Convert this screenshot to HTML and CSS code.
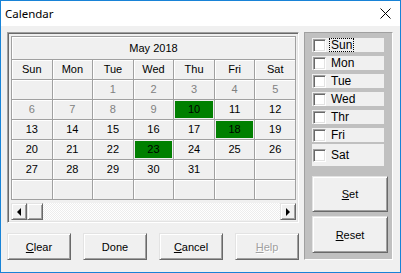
FILE: index.html
```html
<!DOCTYPE html>
<html>
<head>
  <title>Calendar</title>
  <link rel="stylesheet" href="styles.css">
</head>
<body>
  <div class="window">
    <div class="titlebar">
      <span class="title">Calendar</span>
      <svg class="close" width="11" height="11" viewBox="0 0 11 11">
        <path d="M0.5 0.5 L10.5 10.5 M10.5 0.5 L0.5 10.5" stroke="#000" stroke-width="1" fill="none"/>
      </svg>
    </div>

    <div class="content">
      <div class="left">
        <div class="cal-frame">
          <div class="cal-grid">
            <div class="month">May 2018</div>

            <div class="cell head">Sun</div>
            <div class="cell head">Mon</div>
            <div class="cell head">Tue</div>
            <div class="cell head">Wed</div>
            <div class="cell head">Thu</div>
            <div class="cell head">Fri</div>
            <div class="cell head">Sat</div>

            <div class="cell"></div>
            <div class="cell"></div>
            <div class="cell dim">1</div>
            <div class="cell dim">2</div>
            <div class="cell dim">3</div>
            <div class="cell dim">4</div>
            <div class="cell dim">5</div>

            <div class="cell dim">6</div>
            <div class="cell dim">7</div>
            <div class="cell dim">8</div>
            <div class="cell dim">9</div>
            <div class="cell sel">10</div>
            <div class="cell">11</div>
            <div class="cell">12</div>

            <div class="cell">13</div>
            <div class="cell">14</div>
            <div class="cell">15</div>
            <div class="cell">16</div>
            <div class="cell">17</div>
            <div class="cell sel">18</div>
            <div class="cell">19</div>

            <div class="cell">20</div>
            <div class="cell">21</div>
            <div class="cell">22</div>
            <div class="cell sel">23</div>
            <div class="cell">24</div>
            <div class="cell">25</div>
            <div class="cell">26</div>

            <div class="cell">27</div>
            <div class="cell">28</div>
            <div class="cell">29</div>
            <div class="cell">30</div>
            <div class="cell">31</div>
            <div class="cell"></div>
            <div class="cell"></div>

            <div class="cell"></div>
            <div class="cell"></div>
            <div class="cell"></div>
            <div class="cell"></div>
            <div class="cell"></div>
            <div class="cell"></div>
            <div class="cell"></div>
          </div>

          <div class="scrollbar">
            <div class="sb-btn"><span class="arrow-left"></span></div>
            <div class="sb-btn"></div>
            <div class="sb-track"></div>
            <div class="sb-btn"><span class="arrow-right"></span></div>
          </div>
        </div>

        <div class="buttons">
          <button class="btn"><u>C</u>lear</button>
          <button class="btn">Done</button>
          <button class="btn"><u>C</u>ancel</button>
          <button class="btn disabled"><u>H</u>elp</button>
        </div>
      </div>

      <div class="days-panel">
        <div class="day"><span class="box"></span><span class="label focus">Sun</span></div>
        <div class="day"><span class="box"></span><span class="label">Mon</span></div>
        <div class="day"><span class="box"></span><span class="label">Tue</span></div>
        <div class="day"><span class="box"></span><span class="label">Wed</span></div>
        <div class="day"><span class="box"></span><span class="label">Thr</span></div>
        <div class="day"><span class="box"></span><span class="label">Fri</span></div>
        <div class="day sat"><span class="box"></span><span class="label">Sat</span></div>

        <button class="btn big set"><u>S</u>et</button>
        <button class="btn big reset"><u>R</u>eset</button>
      </div>
    </div>
  </div>
</body>
</html>
```

FILE: styles.css
```css
body {
  margin: 0;
  font-family: 'Liberation Sans', Arial, sans-serif;
  font-size: 11px;
  color: #000000;
}

.window {
  width: 401px;
  height: 273px;
  box-sizing: border-box;
  border: 1px solid #1883d7;
  background-color: #f0f0f0;
  display: flex;
  flex-direction: column;
}

.titlebar {
  height: 25px;
  flex: none;
  background-color: #ffffff;
  display: flex;
  align-items: center;
  justify-content: space-between;
  padding: 0 9px 0 4px;
}

.title {
  font-family: 'Noto Sans', sans-serif;
  font-size: 11.5px;
}

.close {
  display: block;
}

.content {
  flex: 1;
  display: flex;
  padding: 6px 0 0 6px;
}

.left {
  width: 292px;
  display: flex;
  flex-direction: column;
}

/* calendar box */
.cal-frame {
  height: 191px;
  box-sizing: border-box;
  border: 1px solid;
  border-color: #a0a0a0 #ffffff #ffffff #a0a0a0;
  box-shadow: inset 1px 1px #696969, inset -1px -1px #e3e3e3;
  padding: 3px 2px 2px 3px;
}

.cal-grid {
  display: grid;
  grid-template-columns: repeat(7, 1fr);
  border-top: 1px solid #a0a0a0;
  border-left: 1px solid #a0a0a0;
}

.month {
  grid-column: span 7;
  height: 22px;
  line-height: 22px;
  text-align: center;
  border-right: 1px solid #a0a0a0;
  border-bottom: 1px solid #a0a0a0;
  box-shadow: inset 1px 1px #ffffff;
}

.cell {
  height: 19px;
  line-height: 19px;
  text-align: center;
  border-right: 1px solid #a0a0a0;
  border-bottom: 1px solid #a0a0a0;
  box-shadow: inset 1px 1px #ffffff;
}

.cell.dim {
  color: #808080;
}

.cell.sel {
  background-color: #008000;
  box-shadow: inset 0 0 0 1px #f0f0f0;
}

/* scroll bar */
.scrollbar {
  margin-top: 3px;
  height: 17px;
  display: flex;
}

.sb-btn {
  width: 16px;
  box-sizing: border-box;
  border: 1px solid;
  border-color: #e3e3e3 #696969 #696969 #e3e3e3;
  box-shadow: inset 1px 1px #ffffff, inset -1px -1px #a0a0a0;
  display: flex;
  align-items: center;
  justify-content: center;
}

.sb-track {
  flex: 1;
  background: repeating-conic-gradient(#ffffff 0 25%, #ededed 0 50%) 0 0 / 2px 2px;
}

.arrow-left {
  width: 0;
  height: 0;
  border-top: 4px solid transparent;
  border-bottom: 4px solid transparent;
  border-right: 4px solid #000000;
}

.arrow-right {
  width: 0;
  height: 0;
  border-top: 4px solid transparent;
  border-bottom: 4px solid transparent;
  border-left: 4px solid #000000;
}

/* push buttons */
.buttons {
  margin-top: 10px;
  display: flex;
  justify-content: space-between;
}

.btn {
  width: 64px;
  height: 27px;
  box-sizing: border-box;
  padding: 0;
  background-color: #f0f0f0;
  border: 1px solid;
  border-color: #e3e3e3 #696969 #696969 #e3e3e3;
  box-shadow: inset 1px 1px #ffffff, inset -1px -1px #a0a0a0;
  font-family: 'Liberation Sans', Arial, sans-serif;
  font-size: 11px;
  color: #000000;
}

.btn.disabled {
  color: #a0a0a0;
  text-shadow: 1px 1px #ffffff;
}

/* weekday panel */
.days-panel {
  margin-left: 5px;
  width: 89px;
  height: 228px;
  box-sizing: border-box;
  border: 1px solid;
  border-color: #a0a0a0 #ffffff #ffffff #a0a0a0;
  background-color: #c0c0c0;
  padding: 5px 5px 0 7px;
  display: flex;
  flex-direction: column;
}

.day {
  width: 72px;
  height: 14px;
  margin-bottom: 4px;
  background-color: #f0f0f0;
  display: flex;
  align-items: center;
}

.day.sat {
  height: 22px;
  margin-top: -2px;
  margin-bottom: 0;
}

.box {
  width: 13px;
  height: 13px;
  margin-left: 1px;
  box-sizing: border-box;
  background-color: #ffffff;
  border: 1px solid;
  border-color: #a0a0a0 #ffffff #ffffff #a0a0a0;
  box-shadow: inset 1px 1px #696969, inset -1px -1px #e3e3e3;
}

.label {
  margin-left: 4px;
  padding: 0 1px;
  font-size: 12px;
  line-height: 12px;
}

.label.focus {
  outline: 1px dotted #000000;
}

.btn.big {
  width: 76px;
}

.btn.set {
  height: 36px;
  margin-top: 10px;
}

.btn.reset {
  height: 37px;
  margin-top: 4px;
}
```
